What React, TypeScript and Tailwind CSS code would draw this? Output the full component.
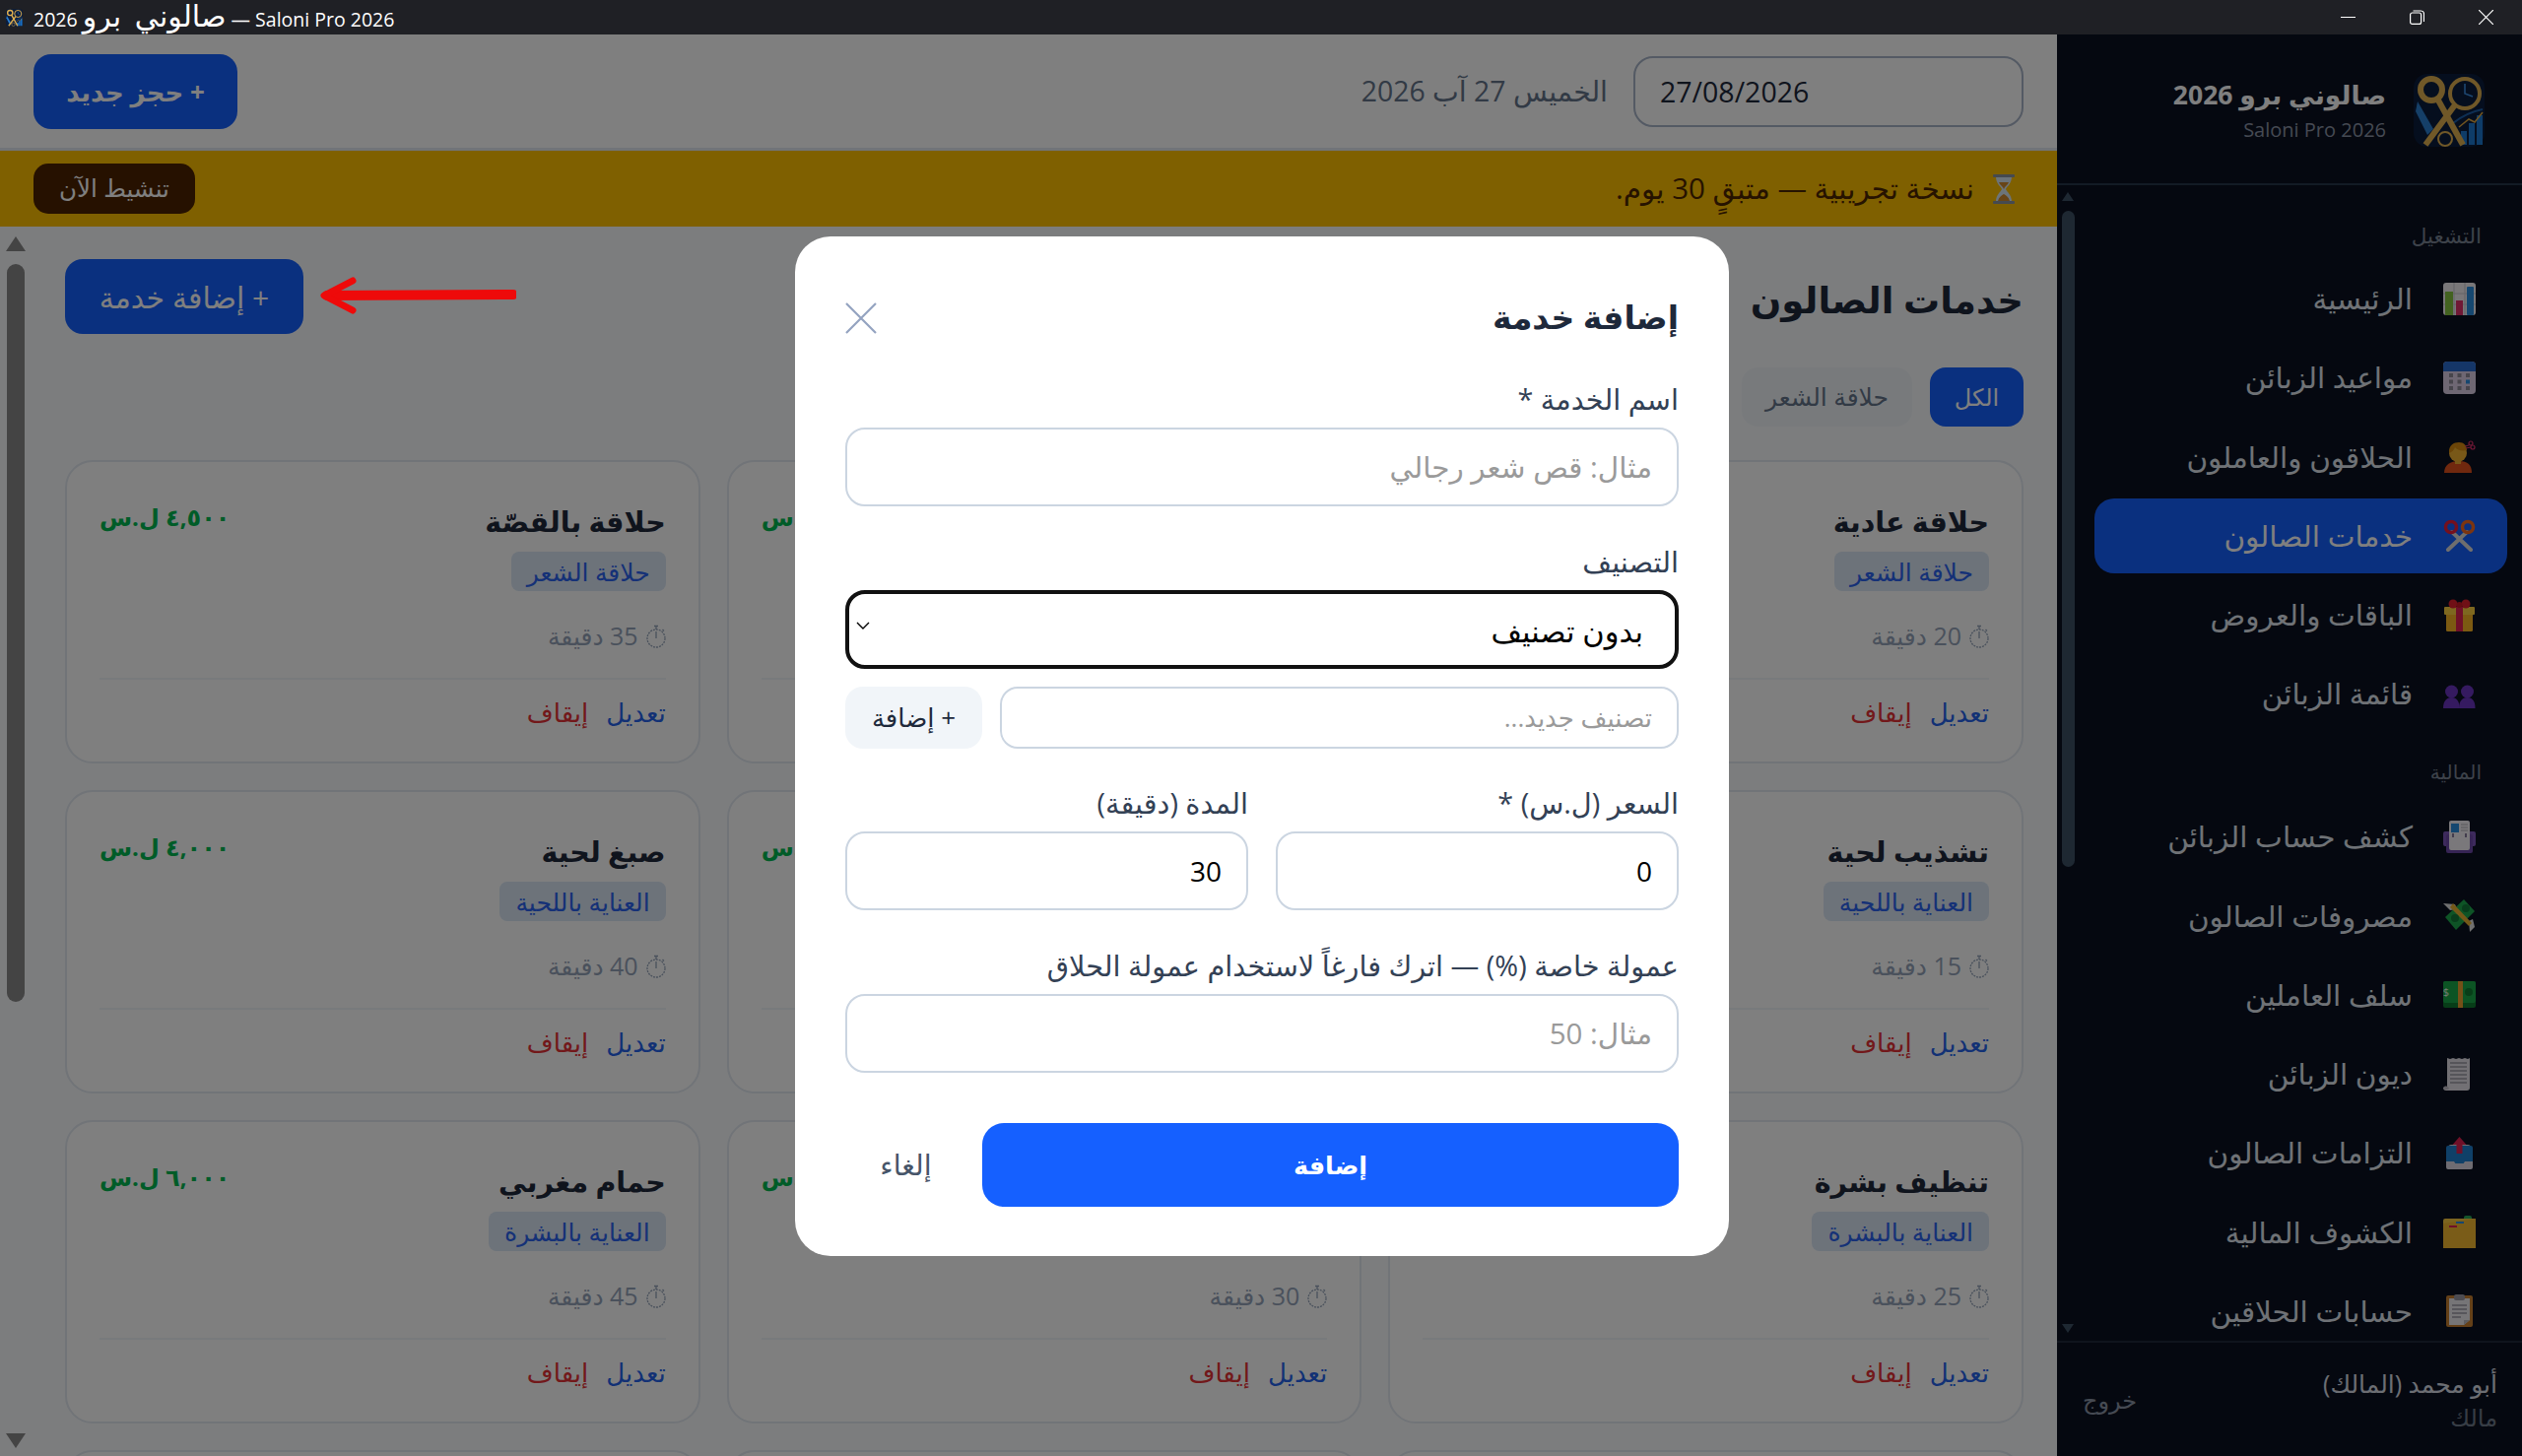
import { ReactNode } from "react";

const ICON = "w-[33px] h-[33px] shrink-0";

function Logo({ className }: { className: string }) {
  return (
    <svg viewBox="0 0 72 78" className={className}>
      <rect x="0" y="2" width="72" height="74" rx="14" fill="#0a1c3c" />
      <path d="M4 30l16 28-6 6-12-24z" fill="#2a7fd0" />
      <path d="M40 52c10-8 20-12 30-14" stroke="#1d5fa8" strokeWidth="2" fill="none" />
      <rect x="48" y="60" width="6" height="14" fill="#1d78d0" />
      <rect x="56" y="52" width="6" height="22" fill="#1d78d0" />
      <rect x="64" y="44" width="6" height="30" fill="#1d78d0" />
      <path d="M46 56l10-8 6 3 8-10" stroke="#e0a840" strokeWidth="1.6" fill="none" />
      <circle cx="18" cy="18" r="11" fill="none" stroke="#e0b050" strokeWidth="6" />
      <path d="M24 27L50 74" stroke="#e0b050" strokeWidth="6" />
      <path d="M46 28L12 74" stroke="#e0b050" strokeWidth="6" />
      <circle cx="52" cy="22" r="15" fill="#0a1c3c" stroke="#e0b050" strokeWidth="4" />
      <path d="M52 12v10l8 3" stroke="#3a8de0" strokeWidth="1.6" fill="none" />
      <circle cx="32" cy="68" r="7" fill="#0a1c3c" stroke="#e0b050" strokeWidth="2" />
    </svg>
  );
}

function ChartIcon() {
  return (
    <svg viewBox="0 0 33 33" className={ICON}>
      <rect width="33" height="33" rx="3" fill="#f2eef2" />
      <path d="M0 11h33M0 22h33M11 0v33M22 0v33" stroke="#c8c8d0" strokeWidth="1" />
      <rect x="2" y="9" width="8" height="24" fill="#86c440" />
      <rect x="13" y="18" width="7" height="15" fill="#e0306a" />
      <rect x="24" y="4" width="7" height="29" rx="1" fill="#2a8ee0" />
    </svg>
  );
}

function CalendarIcon() {
  return (
    <svg viewBox="0 0 33 33" className={ICON}>
      <rect width="33" height="33" rx="4" fill="#dccfe6" />
      <path d="M0 10V4a4 4 0 0 1 4-4h25a4 4 0 0 1 4 4v6z" fill="#2a6cd0" />
      {[6, 14.5, 23].map((x) =>
        [12, 18.5, 25].map((y) => (
          <rect key={`${x}-${y}`} x={x} y={y} width="4" height="4" fill={x === 23 && y === 18.5 ? "#2a8ee0" : "#8f8a98"} />
        )),
      )}
    </svg>
  );
}

function BarberIcon() {
  return (
    <svg viewBox="0 0 33 33" className={ICON}>
      <path d="M1 33c0-8 6-12 15-12s13 4 13 12z" fill="#e0501c" />
      <circle cx="15" cy="13" r="9" fill="#f0b030" />
      <path d="M6 13c-1-8 5-11 10-11s8 3 8 8c-5 1-10 0-12-3-1 3-3 5-6 6z" fill="#d88a10" />
      <rect x="12" y="18" width="6" height="6" fill="#f0b030" />
      <circle cx="28" cy="3" r="2" fill="none" stroke="#e0306a" strokeWidth="1.2" />
      <circle cx="30" cy="7" r="2" fill="none" stroke="#e0306a" strokeWidth="1.2" />
      <path d="M26 5l-4 1M28 7l-5 1" stroke="#e0306a" strokeWidth="1" />
    </svg>
  );
}

function ScissorsIcon() {
  return (
    <svg viewBox="0 0 33 33" className={ICON}>
      <path d="M9 13l19 18M24 13L5 31" stroke="#dcdcdc" strokeWidth="4" strokeLinecap="round" />
      <circle cx="8" cy="8" r="5.5" fill="none" stroke="#e8203c" strokeWidth="3.5" />
      <circle cx="25" cy="8" r="5.5" fill="none" stroke="#f86a20" strokeWidth="3.5" />
    </svg>
  );
}

function GiftIcon() {
  return (
    <svg viewBox="0 0 33 33" className={ICON}>
      <rect x="3" y="12" width="27" height="21" rx="1.5" fill="#f8b424" />
      <rect x="1" y="8" width="31" height="8" rx="1" fill="#fcd040" />
      <rect x="13" y="8" width="7" height="25" fill="#e02050" />
      <circle cx="10" cy="5" r="4.5" fill="#e0202c" />
      <circle cx="23" cy="5" r="4.5" fill="#e0202c" />
      <circle cx="16.5" cy="6" r="3" fill="#c81a24" />
    </svg>
  );
}

function UsersIcon() {
  return (
    <svg viewBox="0 0 33 33" className={ICON}>
      {[8.5, 24.5].map((x) => (
        <g key={x} fill="#6a34c0">
          <circle cx={x} cy="14" r="6.5" />
          <path d={`M${x - 8.5} 31c0-7 3-11 8.5-11s8 4 8 11z`} />
        </g>
      ))}
    </svg>
  );
}

function LedgerIcon() {
  return (
    <svg viewBox="0 0 33 33" className={ICON}>
      <rect y="11" width="33" height="15" rx="2" fill="#7a55b8" />
      <rect x="3" y="14" width="27" height="19" rx="2" fill="#6c48a8" />
      <rect x="6" y="0" width="21" height="30" rx="2" fill="#f4f0f6" />
      <rect x="8" y="3" width="8" height="9" fill="#2a8ee0" />
      <path d="M18 4h7M18 7h7M18 10h7" stroke="#b0b0b8" strokeWidth="1" />
      <path d="M10 13v4M23 13v4" stroke="#403060" strokeWidth="1.2" />
    </svg>
  );
}

function MoneyWingsIcon() {
  return (
    <svg viewBox="0 0 33 33" className={ICON}>
      <path d="M0 4l12 1 2 5-7 1z" fill="#e0e0e0" />
      <path d="M27 33l-1-11 4-2 2 8z" fill="#e0e0e0" />
      <path d="M2 18L21 0l11 12-19 19z" fill="#1ca84c" />
      <path d="M10 4l19 20-3 3L7 8z" fill="#e8b030" />
      <circle cx="12" cy="19" r="4" fill="#107a38" />
      <circle cx="23" cy="9" r="4" fill="#107a38" />
    </svg>
  );
}

function BanknoteIcon() {
  return (
    <svg viewBox="0 0 33 27" className="w-[33px] h-[27px] shrink-0">
      <rect width="33" height="27" rx="2" fill="#0e7a30" />
      <rect width="33" height="22" rx="2" fill="#18a848" />
      <rect x="15" width="5" height="27" fill="#e8a030" />
      <circle cx="26" cy="11" r="4" fill="#0e7a30" />
      <text x="6" y="15" fontSize="11" fill="#e8f8e8">$</text>
    </svg>
  );
}

function ReceiptIcon() {
  return (
    <svg viewBox="0 0 33 33" className={ICON}>
      <path d="M4 0l3 1 3-1 3 1 3-1 3 1 3-1 3 1 2-1v30a3 3 0 0 1-3 3H3a3 3 0 0 1-3-3h4z" fill="#e4e0e8" />
      <path d="M7 5h17M7 9h17M7 13h17M7 17h17M7 21h17M7 25h17" stroke="#9a98a4" strokeWidth="1.4" />
      <path d="M0 30c3-3 5-1 6 1-1 1-4 2-6-1z" fill="#c0bcc6" />
    </svg>
  );
}

function OutboxIcon() {
  return (
    <svg viewBox="0 0 33 33" className={ICON}>
      <rect x="5" y="8" width="23" height="25" rx="3" fill="#d8d4e0" />
      <rect x="3" y="9" width="27" height="18" rx="2" fill="#1f80d0" />
      <path d="M3 25h8l2 3h7l2-3h8v6a2 2 0 0 1-2 2H5a2 2 0 0 1-2-2z" fill="#dcd8e4" />
      <path d="M16.5 0l7 8h-4v9h-6V8h-4z" fill="#e02050" />
    </svg>
  );
}

function DividersIcon() {
  return (
    <svg viewBox="0 0 33 33" className={ICON}>
      <rect x="21" y="0" width="8" height="6" rx="2" fill="#28a858" />
      <rect y="3" width="33" height="30" rx="2" fill="#f8c840" />
      <path d="M0 33V8l33-5v30z" fill="#f4b830" />
      <rect x="13" y="6" width="8" height="2" fill="#2a8ee0" />
      <rect x="6" y="10" width="8" height="2" fill="#e02050" />
    </svg>
  );
}

function ClipboardIcon() {
  return (
    <svg viewBox="0 0 33 33" className={ICON}>
      <rect x="3" y="1" width="27" height="32" rx="2" fill="#c88030" />
      <path d="M6 4h21v22l-6 5H6z" fill="#ecebef" />
      <path d="M21 31l6-5h-6z" fill="#b8b8c0" />
      <rect x="11" y="0" width="11" height="6" rx="2" fill="#9a98a4" />
      <path d="M9 11h15M9 15h15M9 19h15M9 23h9" stroke="#9a98a4" strokeWidth="1.4" />
    </svg>
  );
}

function Hourglass() {
  return (
    <svg viewBox="0 0 22 30" className="w-[22px] h-[30px] shrink-0">
      <path d="M3 2h16c0 8-5 10-6 13 1 3 6 5 6 13H3c0-8 5-10 6-13-1-3-6-5-6-13z" fill="#d8e8f4" />
      <path d="M6 8h10c-1 3-4 4-5 7-1-3-4-4-5-7z" fill="#d08a30" />
      <path d="M5 27c1-4 4-6 6-7 2 1 5 3 6 7z" fill="#d08a30" />
      <rect width="22" height="3" rx="1" fill="#8a94a0" />
      <rect y="27" width="22" height="3" rx="1" fill="#8a94a0" />
    </svg>
  );
}

function Stopwatch() {
  return (
    <svg viewBox="0 0 20 24" className="w-[20px] h-[24px] shrink-0" fill="none" stroke="#94a3b8" strokeWidth="1.3">
      <circle cx="10" cy="14" r="9" strokeDasharray="2 1" />
      <path d="M10 14V7M8 1.5h4M10 1.5V5M16.5 5l1.5 1.5" />
    </svg>
  );
}

type NavEntry = { label: string; icon: ReactNode; active?: boolean };

const opsNav: NavEntry[] = [
  { label: "الرئيسية", icon: <ChartIcon /> },
  { label: "مواعيد الزبائن", icon: <CalendarIcon /> },
  { label: "الحلاقون والعاملون", icon: <BarberIcon /> },
  { label: "خدمات الصالون", icon: <ScissorsIcon />, active: true },
  { label: "الباقات والعروض", icon: <GiftIcon /> },
  { label: "قائمة الزبائن", icon: <UsersIcon /> },
];

const financeNav: NavEntry[] = [
  { label: "كشف حساب الزبائن", icon: <LedgerIcon /> },
  { label: "مصروفات الصالون", icon: <MoneyWingsIcon /> },
  { label: "سلف العاملين", icon: <BanknoteIcon /> },
  { label: "ديون الزبائن", icon: <ReceiptIcon /> },
  { label: "التزامات الصالون", icon: <OutboxIcon /> },
  { label: "الكشوف المالية", icon: <DividersIcon /> },
  { label: "حسابات الحلاقين", icon: <ClipboardIcon /> },
];

const services = [
  { name: "حلاقة عادية", cat: "حلاقة الشعر", mins: 20, price: "٢,٥٠٠" },
  { name: "حلاقة ذقن", cat: "العناية باللحية", mins: 15, price: "٢,٠٠٠" },
  { name: "حلاقة بالقصّة", cat: "حلاقة الشعر", mins: 35, price: "٤,٥٠٠" },
  { name: "تشذيب لحية", cat: "العناية باللحية", mins: 15, price: "٢,٠٠٠" },
  { name: "حلاقة لحية", cat: "العناية باللحية", mins: 20, price: "٣,٠٠٠" },
  { name: "صبغ لحية", cat: "العناية باللحية", mins: 40, price: "٤,٠٠٠" },
  { name: "تنظيف بشرة", cat: "العناية بالبشرة", mins: 25, price: "٥,٠٠٠" },
  { name: "ماسك وجه", cat: "العناية بالبشرة", mins: 30, price: "٥,٠٠٠" },
  { name: "حمام مغربي", cat: "العناية بالبشرة", mins: 45, price: "٦,٠٠٠" },
];

const chips = ["حلاقة الشعر", "العناية باللحية", "العناية بالبشرة", "الصبغ والتلوين", "حمام وتدليك", "تجميل"];

function NavItem({ label, icon, active }: NavEntry) {
  return (
    <div
      className={`flex items-center gap-[31px] h-[76px] mb-[4.25px] rounded-[20px] pr-[32px] ${
        active ? "bg-[#1560ff] text-white" : "text-[#dfe4ec]"
      }`}
    >
      <div className="w-[33px] flex justify-center">{icon}</div>
      <span className="text-[29.5px] leading-[40px] whitespace-nowrap">{label}</span>
    </div>
  );
}

function ServiceCard({ name, cat, mins, price }: (typeof services)[number]) {
  return (
    <div className="h-[308px] rounded-[28px] border-2 border-[#e2e8f0] bg-white px-[33px] pt-[34px]">
      <div className="flex justify-between items-start">
        <div className="flex flex-col items-start">
          <div className="text-[28.5px] leading-[52px] font-bold text-[#1e293b]">{name}</div>
          <span className="mt-[5px] h-[40px] px-[16px] rounded-[8px] bg-[#dbe6f5] text-[#2a62ee] text-[25px] leading-[40px]">
            {cat}
          </span>
        </div>
        <div className="text-[24px] leading-[44px] font-bold text-[#00b850] whitespace-nowrap">{price} ل.س</div>
      </div>
      <div className="mt-[30px] flex items-center gap-[8px] h-[32px] text-[25px] text-[#94a3b8]">
        <Stopwatch />
        <span>{mins} دقيقة</span>
      </div>
      <div className="mt-[26px] border-t-2 border-[#f1f5f9] pt-[16px] flex gap-[18px] text-[26px] leading-[34px]">
        <span className="text-[#2563eb]">تعديل</span>
        <span className="text-[#e53035]">إيقاف</span>
      </div>
    </div>
  );
}

function TextField({ placeholder, value }: { placeholder?: string; value?: string }) {
  return (
    <input
      readOnly
      placeholder={placeholder}
      value={value ?? ""}
      className="w-full h-[80px] rounded-[20px] border-2 border-[#cbd5e1] bg-white px-[25px] text-[28px] text-black placeholder:text-[#9a9a9a] placeholder:text-[29.5px] outline-none"
    />
  );
}

function FieldLabel({ children }: { children: ReactNode }) {
  return <div className="h-[36px] leading-[31px] text-[28.8px] font-medium text-[#334155] mb-[9px] whitespace-nowrap">{children}</div>;
}

export default function App() {
  return (
    <div className="relative w-[2560px] h-[1478px] overflow-hidden flex flex-col [font-family:'Open_Sans','DejaVu_Sans',sans-serif]">
      {/* window title bar */}
      <div className="h-[35px] shrink-0 bg-[#1f2025] flex items-center text-white">
        <Logo className="w-[17px] h-[20px] ml-[6px] mr-[11px]" />
        <span className="text-[19.5px] leading-[30px] whitespace-nowrap">
          <span className="text-[30px] leading-[30px] [word-spacing:6px]">صالوني برو</span> 2026 — Saloni Pro 2026
        </span>
        <div className="ml-auto flex pr-[2px]">
          <div className="w-[70px] h-[35px] flex items-center justify-center">
            <div className="w-[15px] h-px bg-white" />
          </div>
          <div className="w-[70px] h-[35px] flex items-center justify-center">
            <svg viewBox="0 0 15 15" className="w-[15px] h-[15px]" fill="none" stroke="white" strokeWidth="1.2">
              <rect x="0.6" y="3" width="11" height="11.4" rx="2" />
              <path d="M3.5 1h8a3 3 0 0 1 3 3v8" />
            </svg>
          </div>
          <div className="w-[70px] h-[35px] flex items-center justify-center">
            <svg viewBox="0 0 15 15" className="w-[15px] h-[15px]" stroke="white" strokeWidth="1.2">
              <path d="M0 0l15 15M15 0L0 15" />
            </svg>
          </div>
        </div>
      </div>

      <div dir="rtl" className="flex flex-1 min-h-0">
        {/* sidebar */}
        <aside className="w-[472px] shrink-0 bg-[#0a1020] flex flex-col">
          <div className="h-[153px] shrink-0 border-b-2 border-[#27364a] flex items-start pt-[38px] pr-[38px] gap-[28px]">
            <Logo className="w-[72px] h-[78px] shrink-0" />
            <div className="pt-[2px]">
              <div className="text-[26.5px] leading-[42px] font-bold text-white whitespace-nowrap">صالوني برو 2026</div>
              <div className="text-[20px] leading-[28px] text-[#8a94a6] mt-[1px]">Saloni Pro 2026</div>
            </div>
          </div>
          <div className="flex-1 min-h-0 flex overflow-hidden">
            <div className="flex-1 pr-[15px] pl-[16px] pt-[36px]">
              <div className="h-[30px] leading-[30px] mb-[11px] pr-[26px] text-[21.5px] text-[#7a8494]">التشغيل</div>
              {opsNav.map((n) => (
                <NavItem key={n.label} {...n} />
              ))}
              <div className="h-[30px] leading-[30px] mt-[27px] mb-[12px] pr-[26px] text-[20px] text-[#7a8494]">المالية</div>
              {financeNav.map((n) => (
                <NavItem key={n.label} {...n} />
              ))}
            </div>
            <div className="w-[22px] shrink-0 pt-[7px] pb-[8px] flex flex-col items-center">
              <div className="w-0 h-0 border-x-[6.5px] border-x-transparent border-b-[9px] border-b-[#3c5064]" />
              <div className="mt-[10px] w-[13px] h-[666px] rounded-full bg-[#3c5064]" />
              <div className="mt-auto w-0 h-0 border-x-[6.5px] border-x-transparent border-t-[9px] border-t-[#3c5064]" />
            </div>
          </div>
          <div className="h-[117px] shrink-0 border-t-2 border-[#1e293b] flex items-center justify-between pr-[25px] pl-[26px]">
            <div>
              <div className="text-[25px] leading-[36px] text-[#d8dde6]">أبو محمد (المالك)</div>
              <div className="text-[24px] leading-[34px] text-[#6f7a8a]">مالك</div>
            </div>
            <div className="text-[24px] text-[#8a94a6]">خروج</div>
          </div>
        </aside>

        {/* main column */}
        <main className="flex-1 min-w-0 flex flex-col bg-[#f9fbfd]">
          <header className="h-[118px] shrink-0 bg-white border-b-[3px] border-[#e2e8f0] flex items-center px-[34px]">
            <input
              readOnly
              dir="ltr"
              value="27/08/2026"
              className="w-[396px] h-[72px] rounded-[20px] border-2 border-[#a8b4c8] bg-white px-[25px] text-[28.5px] text-[#1e293b] outline-none"
            />
            <span className="mr-[26px] text-[28.4px] text-[#64748b] whitespace-nowrap">الخميس 27 آب 2026</span>
            <button className="mr-auto w-[207px] h-[76px] rounded-[18px] bg-[#1560ff] text-white text-[26px] font-bold pt-[2px]">
              + حجز جديد
            </button>
          </header>

          <div className="h-[77px] shrink-0 bg-[#ffc000] flex items-center pr-[43px] pl-[34px] text-[#4d2600]">
            <Hourglass />
            <span className="mr-[19px] text-[29.5px] font-medium whitespace-nowrap">نسخة تجريبية — متبقٍ 30 يوم.</span>
            <button className="mr-auto w-[164px] h-[51px] rounded-[15px] bg-[#4d2200] text-white text-[24.5px] font-medium">
              تنشيط الآن
            </button>
          </div>

          <div className="flex-1 min-h-0 flex overflow-hidden">
            <div className="flex-1 min-w-0 pr-[34px] pl-[34px] pt-[33px]">
              <div className="flex justify-between items-center h-[76px]">
                <h1 className="text-[37px] font-bold text-[#1e293b] mt-[6px]">خدمات الصالون</h1>
                <button className="w-[242px] h-[76px] rounded-[18px] bg-[#1560ff] text-white text-[30px]">+ إضافة خدمة</button>
              </div>
              <div className="mt-[34px] flex gap-[18px] h-[60px] whitespace-nowrap">
                <div className="w-[95px] rounded-[16px] bg-[#1560ff] text-white flex items-center justify-center text-[24px]">الكل</div>
                {chips.map((c) => (
                  <div key={c} className="px-[24px] rounded-[16px] bg-[#f1f5f9] text-[#64748b] flex items-center text-[25px]">
                    {c}
                  </div>
                ))}
              </div>
              <div className="mt-[34px] grid grid-cols-3 gap-[27px]">
                {services.map((s) => (
                  <ServiceCard key={s.name} {...s} />
                ))}
                <div className="h-[308px] rounded-[28px] border-2 border-[#e2e8f0] bg-white" />
                <div className="h-[308px] rounded-[28px] border-2 border-[#e2e8f0] bg-white" />
                <div className="h-[308px] rounded-[28px] border-2 border-[#e2e8f0] bg-white" />
              </div>
            </div>
            <div className="w-[32px] shrink-0 pt-[10px] pb-[8px] flex flex-col items-center">
              <div className="w-0 h-0 border-x-[10px] border-x-transparent border-b-[15px] border-b-[#888888]" />
              <div className="mt-[13px] w-[18px] h-[749px] rounded-full bg-[#888888]" />
              <div className="mt-auto w-0 h-0 border-x-[10px] border-x-transparent border-t-[15px] border-t-[#888888]" />
            </div>
          </div>
        </main>
      </div>

      {/* modal overlay */}
      <div dir="rtl" className="absolute inset-x-0 top-[35px] bottom-0 bg-black/50 flex items-center justify-center pl-[2px] pt-[2px]">
        <div className="w-[948px] h-[1035px] rounded-[36px] bg-white px-[51px] pt-[50px]">
          <div className="flex items-center justify-between h-[67px]">
            <h2 className="text-[33px] font-bold text-[#1e293b] -mt-[4px]">إضافة خدمة</h2>
            <svg viewBox="0 0 32 32" className="w-[32px] h-[32px] -mt-[2px]" stroke="#94a3c0" strokeWidth="2.2">
              <path d="M1 1l30 30M31 1L1 31" />
            </svg>
          </div>
          <div className="mt-[32px]">
            <FieldLabel>اسم الخدمة *</FieldLabel>
            <TextField placeholder="مثال: قص شعر رجالي" />
          </div>
          <div className="mt-[40px]">
            <FieldLabel>التصنيف</FieldLabel>
            <div className="h-[80px] rounded-[20px] border-4 border-[#111111] bg-white flex items-center justify-between pr-[32px] pl-[7px] text-[30.5px] text-black">
              <span className="mt-[4px]">بدون تصنيف</span>
              <svg viewBox="0 0 14 8" className="w-[14px] h-[8px] -mt-[8px]" fill="none" stroke="black" strokeWidth="1.4">
                <path d="M1 1l6 6 6-6" />
              </svg>
            </div>
          </div>
          <div className="mt-[18px] flex gap-[18px] h-[63px]">
            <input
              readOnly
              placeholder="تصنيف جديد..."
              className="flex-1 min-w-0 rounded-[18px] border-2 border-[#cbd5e1] bg-white px-[25px] text-[26px] placeholder:text-[#9a9a9a] outline-none"
            />
            <button className="w-[139px] rounded-[18px] bg-[#f1f5f9] text-[#1e293b] text-[26px]">+ إضافة</button>
          </div>
          <div className="mt-[39px] grid grid-cols-2 gap-[28px]">
            <div>
              <FieldLabel>السعر (ل.س) *</FieldLabel>
              <TextField value="0" />
            </div>
            <div>
              <FieldLabel>المدة (دقيقة)</FieldLabel>
              <TextField value="30" />
            </div>
          </div>
          <div className="mt-[40px]">
            <FieldLabel>عمولة خاصة (%) — اترك فارغاً لاستخدام عمولة الحلاق</FieldLabel>
            <TextField placeholder="مثال: 50" />
          </div>
          <div className="mt-[51px] flex">
            <button className="flex-1 h-[85px] rounded-[22px] bg-[#1560ff] text-white text-[25.5px] font-bold">إضافة</button>
            <button className="w-[139px] pr-[16px] text-[28.5px] text-[#475569]">إلغاء</button>
          </div>
        </div>
      </div>

      {/* annotation arrow drawn on top of the screenshot */}
      <svg viewBox="0 0 200 38" className="absolute left-[324px] top-[281px] w-[200px] h-[38px]">
        <path d="M197 18L8 19" stroke="#ee0a0a" strokeWidth="10" strokeLinecap="round" fill="none" />
        <path d="M34 4L5 19l29 15" stroke="#ee0a0a" strokeWidth="7" strokeLinecap="round" strokeLinejoin="round" fill="none" />
      </svg>
    </div>
  );
}
